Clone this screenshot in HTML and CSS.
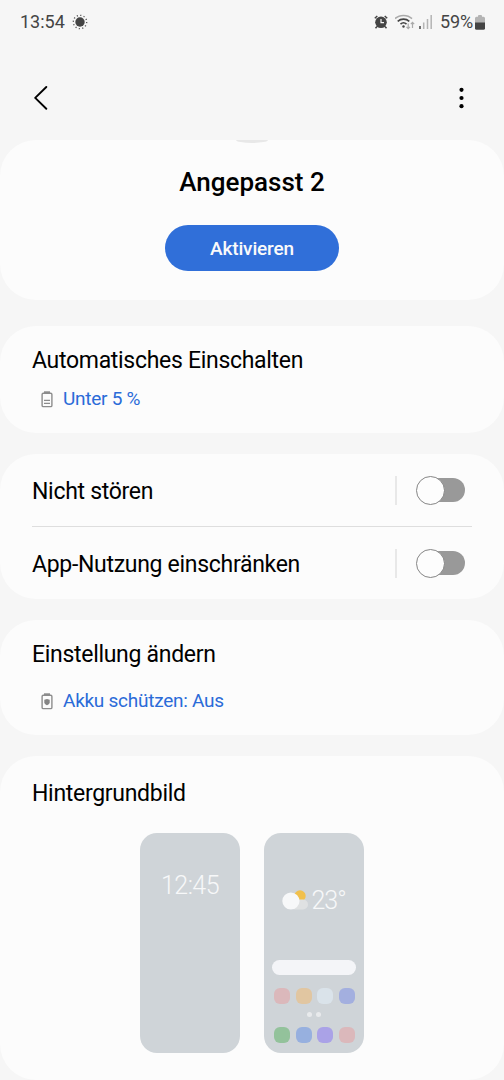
FILE: index.html
```html
<!DOCTYPE html>
<html lang="de">
<head>
    <meta charset="UTF-8">
    <title>Angepasst 2</title>
    <link rel="stylesheet" href="styles.css">
</head>
<body>
    <div class="statusbar">
        <span class="time">13:54</span>
        <svg class="sun" width="16" height="16" viewBox="0 0 16 16">
            <circle cx="8" cy="8" r="4.7" fill="#444"/>
            <circle cx="8" cy="8" r="6.7" fill="none" stroke="#555" stroke-width="1.3" stroke-dasharray="1.2 2.308"/>
        </svg>
        <svg class="alarm" width="14" height="14" viewBox="0 0 14 14">
            <path d="M.8 3.2 3.3 1M13.2 3.2 10.7 1M3 11.5 1.5 13.3M11 11.5l1.5 1.8" stroke="#444" stroke-width="1.5" fill="none"/>
            <circle cx="7" cy="7.3" r="5.8" fill="#444"/>
            <path d="M7 4v3.6h3" stroke="#f6f6f6" stroke-width="1.2" fill="none"/>
        </svg>
        <svg class="wifi" width="21" height="16" viewBox="0 0 21 16">
            <path d="M0 4.6C4.5.3 12.500.3 17 4.600" stroke="#aaa" stroke-width="1.5" fill="none"/>
            <path d="M2.700 7.400c3.300-3 8.300-3 11.600 0M5.500 10.200c1.800-1.700 4.200-1.700 6 0" stroke="#444" stroke-width="1.6" fill="none"/>
            <circle cx="8.500" cy="12.500" r="1.200" fill="#444"/>
            <path d="M13.200 9.500v5M11.500 12.900l1.700 1.800 1.700-1.800M17.500 14V8.500M15.800 10.100l1.700-1.800 1.700 1.800" stroke="#aaa" stroke-width="1.2" fill="none"/>
        </svg>
        <svg class="signal" width="14" height="14" viewBox="0 0 14 14">
            <path d="M1 11v3" stroke="#444" stroke-width="1.5"/>
            <path d="M4.7 7.5V14M8.5 4v10M12.2 0v14" stroke="#b4b4b4" stroke-width="1.5"/>
        </svg>
        <span class="percent">59%</span>
        <svg class="battery" width="10" height="15" viewBox="0 0 10 15">
            <path d="M3 1a1 1 0 0 1 1-1h2a1 1 0 0 1 1 1v.8h1.5A1.5 1.5 0 0 1 10 3.3V8H0V3.3a1.5 1.5 0 0 1 1.5-1.5H3z" fill="#b4b4b4"/>
            <path d="M0 7.5h10v5.7a1.6 1.6 0 0 1-1.6 1.6H1.6A1.6 1.6 0 0 1 0 13.2z" fill="#444"/>
        </svg>
    </div>
    <div class="toolbar">
        <svg width="14" height="26" viewBox="0 0 14 26">
            <path d="M12.3 2 1.2 12.9 12.3 23.8" fill="none" stroke="#000" stroke-width="1.9" stroke-linecap="round" stroke-linejoin="round"/>
        </svg>
        <svg width="6" height="22" viewBox="0 0 6 22">
            <circle cx="3.5" cy="2.8" r="2.1"/><circle cx="3.5" cy="11" r="2.1"/><circle cx="3.5" cy="19.2" r="2.1"/>
        </svg>
    </div>

    <div class="card hero">
        <div class="hero-icon"></div>
        <h1>Angepasst 2</h1>
        <button>Aktivieren</button>
    </div>

    <div class="card auto">
        <h2>Automatisches Einschalten</h2>
        <div class="detail">
            <svg width="12" height="17" viewBox="0 0 12 17">
                <rect x="3" y=".3" width="6" height="2.2" fill="#8c8c8c"/>
                <rect x="1.1" y="2.2" width="9.8" height="13.4" rx="1.2" fill="none" stroke="#8c8c8c" stroke-width="1.4"/>
                <path d="M3 9.4h6M3 12.4h6" stroke="#8c8c8c" stroke-width="1.2"/>
            </svg>
            <span>Unter 5 %</span>
        </div>
    </div>

    <div class="card switches">
        <div class="row">
            <h2>Nicht stören</h2>
            <div class="switch"><span class="thumb"></span></div>
        </div>
        <div class="row">
            <h2>App-Nutzung einschränken</h2>
            <div class="switch"><span class="thumb"></span></div>
        </div>
    </div>

    <div class="card change">
        <h2>Einstellung ändern</h2>
        <div class="detail">
            <svg width="12" height="17" viewBox="0 0 12 17">
                <rect x="3" y=".3" width="6" height="2.2" fill="#8c8c8c"/>
                <rect x="1.1" y="2.2" width="9.8" height="13.4" rx="1.2" fill="none" stroke="#8c8c8c" stroke-width="1.4"/>
                <path d="M6 5.9 8.7 6.8v2.4c0 1.4-1.2 2.4-2.7 3.1-1.5-.7-2.7-1.7-2.7-3.1V6.8z" fill="#858585"/>
            </svg>
            <span>Akku schützen: Aus</span>
        </div>
    </div>

    <div class="card wallpaper">
        <h2>Hintergrundbild</h2>
        <div class="previews">
            <div class="phone lock">12:45</div>
            <div class="phone home">
                <div class="weather">
                    <svg width="27" height="20" viewBox="0 0 27 20">
                        <circle cx="18" cy="6" r="5.7" fill="#f1c04c"/>
                        <rect x="8" y="9.5" width="18" height="10" rx="5" fill="#dfe1e2"/>
                        <circle cx="8.9" cy="11" r="8.6" fill="#f7f8f9"/>
                    </svg>
                    <span>23°</span>
                </div>
                <div class="search"></div>
                <div class="apps">
                    <i class="red"></i><i class="orange"></i><i class="pale"></i><i class="indigo"></i>
                </div>
                <div class="dots"><b></b><b></b></div>
                <div class="apps">
                    <i class="green"></i><i class="blue"></i><i class="violet"></i><i class="red"></i>
                </div>
            </div>
        </div>
    </div>
</body>
</html>
```
FILE: styles.css
```css
* { box-sizing: border-box; }
body { margin: 0; height: 1080px; overflow: hidden; background: #f6f6f6; color: #000; font-family: Roboto, sans-serif; }
svg { display: block; flex: none; }
h1, h2 { margin: 0; white-space: nowrap; }
h2 { font-size: 23px; font-weight: 400; line-height: 28px; letter-spacing: -0.3px; }

.statusbar { height: 44px; padding: 0 19px 0 20px; display: flex; align-items: center; color: #444; font-size: 18px; }
.time, .percent { line-height: 22px; }
.time { width: 46px; }
.sun { margin-left: 6px; }
.alarm { margin-left: auto; }
.wifi { margin-left: 7px; }
.signal { margin-left: 3px; }
.percent { margin: 0 2px 0 7px; letter-spacing: -0.1px; }

.toolbar { height: 96px; padding: 12px 40px 0 34px; display: flex; align-items: center; justify-content: space-between; }

.card { background: #fcfcfc; border-radius: 36px; padding: 0 32px; overflow: hidden; }
.hero { height: 160px; display: flex; flex-direction: column; align-items: center; }
.hero-icon { width: 32px; height: 3px; background: #e8e8e8; border-radius: 0 0 50% 50% / 0 0 100% 100%; }
h1 { margin-top: 23px; font-size: 26px; font-weight: 500; line-height: 32px; }
button { width: 174px; height: 46px; margin-top: 27px; padding: 0; border: 0; border-radius: 23px; background: #306fd9; color: #fafafa; font: 500 19px Roboto, sans-serif; letter-spacing: -0.15px; }

.auto { height: 107px; margin-top: 26px; padding-top: 21px; }
.detail { display: flex; align-items: center; gap: 10px; margin-left: 9px; color: #2a6bd8; font-size: 19px; line-height: 24px; letter-spacing: -0.26px; }
.auto .detail { margin-top: 12px; }

.switches { height: 145px; margin-top: 21px; }
.row { width: 440px; height: 73px; display: flex; align-items: center; justify-content: space-between; padding-right: 7px; }
.row h2 { padding-top: 3px; }
.row:first-child { border-bottom: 1px solid #dedede; }
.row:last-child { height: 72px; }
.switch { position: relative; width: 70px; height: 29px; border-left: 2px solid #e8e8e8; display: flex; align-items: center; justify-content: flex-end; }
.switch::before { content: ""; width: 44px; height: 24px; border-radius: 12px; background: #999; }
.thumb { position: absolute; left: 18.5px; top: 0; width: 29px; height: 29px; border-radius: 50%; border: 1px solid #858585; background: #fdfdfd; }

.change { height: 115px; margin-top: 21px; padding-top: 21px; }
.change .detail { margin-top: 20px; }

.wallpaper { height: 324px; margin-top: 21px; padding-top: 24px; }
.previews { display: flex; justify-content: center; gap: 24px; margin-top: 25px; }
.phone { width: 100px; height: 220px; border-radius: 17px; background: #cfd4d8; color: #f7f8f9; font-weight: 300; }
.lock { padding-top: 38px; text-align: center; font-size: 25px; line-height: 30px; letter-spacing: -0.5px; }
.home { padding: 52px 8px 0; }
.weather { display: flex; align-items: center; justify-content: center; gap: 2px; height: 30px; font-size: 25px; letter-spacing: -1px; }
.search { height: 15px; margin-top: 45px; border-radius: 8px; background: #f4f5f8; }
.apps { display: flex; justify-content: space-between; margin-top: 13px; padding: 0 1px 0 2px; }
.apps i { width: 16px; height: 16px; border-radius: 6px; }
.dots { display: flex; justify-content: center; gap: 4px; margin-top: 8px; }
.dots b { width: 5px; height: 5px; border-radius: 50%; background: #e8eaec; }
.dots + .apps { margin-top: 10px; }
.red { background: #dbb8bb; }
.orange { background: #e1c6a1; }
.pale { background: #dae3ea; }
.indigo { background: #a3afdf; }
.green { background: #93c29b; }
.blue { background: #97b0df; }
.violet { background: #aaa2e7; }
```
